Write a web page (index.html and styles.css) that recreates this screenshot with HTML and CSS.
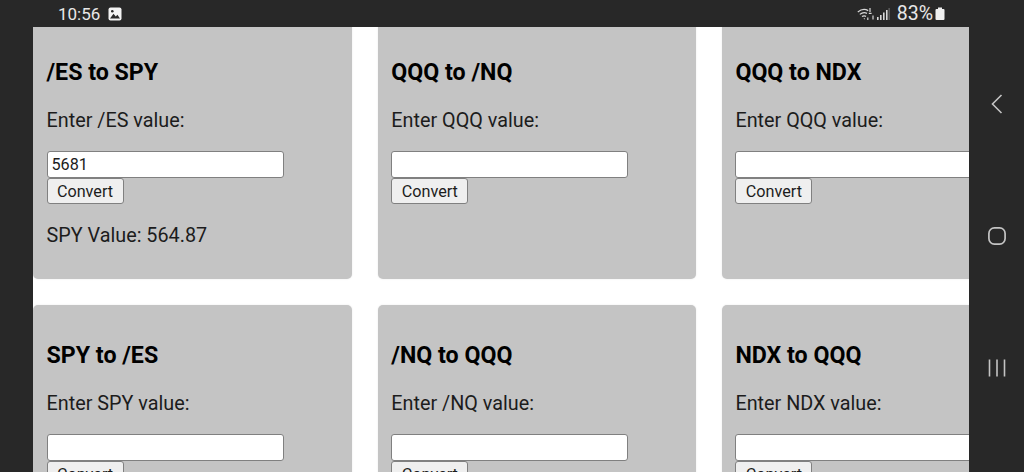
FILE: index.html
```html
<!DOCTYPE html>
<html lang="en">
<head>
  <meta charset="UTF-8" />
  <meta name="viewport" content="width=device-width, initial-scale=1.0" />
  <title>Converters</title>
  <link rel="stylesheet" href="styles.css">
</head>
<body>
  <header class="status">
    <div class="status-left">
      <span class="time">10:56</span>
      <svg class="pic" width="14" height="14" viewBox="0 0 14 14">
        <rect x="0.5" y="0.5" width="13" height="13" rx="2" fill="#f2f2f2"/>
        <path d="M2 11.5 L5.5 6.8 L7.8 9.4 L9.4 7.8 L12 11.5 Z" fill="#282828"/>
        <circle cx="4.3" cy="4.2" r="1.3" fill="#282828"/>
      </svg>
    </div>
    <div class="status-right">
      <svg class="wifi" width="18" height="14" viewBox="0 0 18 14" fill="none" stroke="#d8d8d8" stroke-width="1.2">
        <path d="M0.8 5 Q6 0.8 11.2 3.6"/>
        <path d="M2.8 7.4 Q6.4 4.6 10 6.4"/>
        <path d="M5 9.6 Q7 8.4 9 9.4"/>
        <path d="M7 12 L7.6 11.4"/>
        <path d="M13 1 V5 M11.8 6.4 H14.6 M16 8.4 V12.6 M10.8 10.4 V13"/>
      </svg>
      <svg class="signal" width="13" height="14" viewBox="0 0 13 14" fill="#d8d8d8">
        <rect x="0" y="10" width="1.6" height="3"/>
        <rect x="3" y="8" width="1.6" height="5"/>
        <rect x="6" y="5.5" width="1.6" height="7.5"/>
        <rect x="9" y="3" width="1.6" height="10"/>
        <rect x="11.6" y="1" width="1" height="12" fill="#777"/>
      </svg>
      <span class="battery-pct">83%</span>
      <svg class="battery" width="10" height="14" viewBox="0 0 10 14" fill="#f0f0f0">
        <rect x="3" y="0.5" width="4" height="2"/>
        <rect x="0.5" y="2" width="9" height="11" rx="1"/>
      </svg>
    </div>
  </header>

  <div class="screen">
    <main class="page">
      <div class="grid">
        <section class="card">
          <h2>/ES to SPY</h2>
          <p>Enter /ES value:</p>
          <input type="text" value="5681" />
          <button>Convert</button>
          <p class="result">SPY Value: 564.87</p>
        </section>
        <section class="card">
          <h2>QQQ to /NQ</h2>
          <p>Enter QQQ value:</p>
          <input type="text" />
          <button>Convert</button>
        </section>
        <section class="card">
          <h2>QQQ to NDX</h2>
          <p>Enter QQQ value:</p>
          <input type="text" />
          <button>Convert</button>
        </section>
        <section class="card">
          <h2>SPY to /ES</h2>
          <p>Enter SPY value:</p>
          <input type="text" />
          <button>Convert</button>
        </section>
        <section class="card">
          <h2>/NQ to QQQ</h2>
          <p>Enter /NQ value:</p>
          <input type="text" />
          <button>Convert</button>
        </section>
        <section class="card">
          <h2>NDX to QQQ</h2>
          <p>Enter NDX value:</p>
          <input type="text" />
          <button>Convert</button>
        </section>
      </div>
    </main>

    <nav class="softkeys">
      <svg width="14" height="22" viewBox="0 0 14 22" fill="none" stroke="#c4c4c4" stroke-width="1.6">
        <path d="M11.5 2 L2.5 11 L11.5 20"/>
      </svg>
      <svg width="20" height="20" viewBox="0 0 20 20" fill="none" stroke="#c4c4c4" stroke-width="1.7">
        <rect x="1.9" y="1.9" width="16.2" height="16.2" rx="5.5"/>
      </svg>
      <svg class="recents" width="18" height="18" viewBox="0 0 18 18" fill="none" stroke="#c4c4c4" stroke-width="1.6">
        <path d="M1.5 0.5 V17.5 M9 0.5 V17.5 M16.5 0.5 V17.5"/>
      </svg>
    </nav>
  </div>
</body>
</html>
```
FILE: styles.css
```css
:root {
  --bar: #282828;
  --card: #c4c4c4;
}

html, body {
  height: 100%;
}

body {
  margin: 0;
  display: flex;
  flex-direction: column;
  overflow: hidden;
  background-color: var(--bar);
  font-family: Roboto, sans-serif;
  color: #1c1c1c;
}

.status {
  height: 27px;
  flex: none;
  display: flex;
  justify-content: space-between;
  align-items: center;
  padding: 0 79px 0 58px;
  color: #e8e8e8;
  font-size: 17px;
}

.status-left,
.status-right {
  display: flex;
  align-items: center;
}

.pic { margin-left: 8px; }
.wifi { margin-right: 2px; }
.signal { margin-right: 7px; }
.battery-pct { font-size: 19.5px; margin-right: 2px; }

.screen {
  flex: 1;
  min-height: 0;
  display: flex;
  padding-left: 33px;
}

.page {
  flex: 1;
  min-width: 0;
  overflow: hidden;
  background-color: #ffffff;
}

.grid {
  display: grid;
  grid-template-columns: 318.8px 318.1px 318.5px;
  grid-auto-rows: 257px;
  gap: 26px;
  margin-top: -5px;
}

.card {
  padding: 0 13.5px;
  background-color: var(--card);
  border-radius: 5px;
  box-shadow: 0 0 2px rgba(0, 0, 0, 0.1);
}

.card h2 {
  margin: 37px 0 0 0;
  font-size: 23.2px;
  line-height: 27px;
  font-weight: 700;
  color: #000;
}

.card p {
  margin: 24px 0 0 0;
  font-size: 19.8px;
  line-height: 21px;
}

.card input {
  display: block;
  box-sizing: border-box;
  width: 237px;
  height: 27px;
  margin: 20px 0 0 0;
  padding: 0 4px;
  background-color: #fff;
  border: 1px solid #808080;
  border-radius: 3px;
  font-family: Roboto, sans-serif;
  font-size: 16.2px;
  color: #1c1c1c;
}

.card button {
  display: block;
  box-sizing: border-box;
  width: 77px;
  height: 26px;
  padding: 0;
  background-color: #efefef;
  border: 1px solid #808080;
  border-radius: 3px;
  font-family: Roboto, sans-serif;
  font-size: 16.2px;
  color: #1c1c1c;
}

.card .result {
  margin-top: 21px;
}

.softkeys {
  width: 55px;
  flex: none;
  display: flex;
  flex-direction: column;
  align-items: center;
  gap: 111px;
  padding-top: 66px;
}

.recents {
  margin-top: 2px;
}
```
